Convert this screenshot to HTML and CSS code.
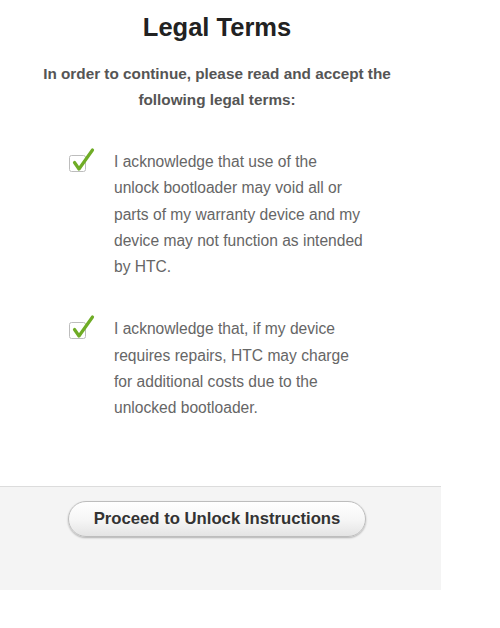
FILE: index.html
```html
<!DOCTYPE html>
<html>
<head>
<meta charset="utf-8">
<link rel="stylesheet" href="styles.css">
</head>
<body>
<div class="page">
  <div class="main">
    <h1 class="title">Legal Terms</h1>
    <p class="intro">In order to continue, please read and accept the following legal terms:</p>
    <ul class="terms">
      <li class="term">
        <span class="check"><svg width="28" height="28" viewBox="0 0 28 28"><rect x="2.5" y="9.5" width="16" height="16" rx="2" fill="#fff" stroke="#bdbdbd"/><path d="M7.5 16.5 L12 23 L25.5 4" fill="none" stroke="#6fac26" stroke-width="3.2" stroke-linecap="round" stroke-linejoin="round"/></svg></span>
        <span class="text">I acknowledge that use of the unlock bootloader may void all or parts of my warranty device and my device may not function as intended by HTC.</span>
      </li>
      <li class="term">
        <span class="check"><svg width="28" height="28" viewBox="0 0 28 28"><rect x="2.5" y="9.5" width="16" height="16" rx="2" fill="#fff" stroke="#bdbdbd"/><path d="M7.5 16.5 L12 23 L25.5 4" fill="none" stroke="#6fac26" stroke-width="3.2" stroke-linecap="round" stroke-linejoin="round"/></svg></span>
        <span class="text">I acknowledge that, if my device requires repairs, HTC may charge for additional costs due to the unlocked bootloader.</span>
      </li>
    </ul>
  </div>
  <div class="footer">
    <button class="proceed">Proceed to Unlock Instructions</button>
  </div>
</div>
</body>
</html>
```
FILE: styles.css
```css
html, body {
  margin: 0;
  padding: 0;
  background: #fff;
}
body {
  font-family: "Liberation Sans", Arial, sans-serif;
}
.page {
  width: 441px;
}
.main {
  padding-top: 11px;
  height: 474px;
  box-sizing: border-box;
}
.title {
  margin: 0;
  padding-right: 7px;
  text-align: center;
  font-size: 25.5px;
  line-height: 32px;
  font-weight: bold;
  color: #222;
}
.intro {
  margin: 18px auto 0;
  width: 380px;
  padding-right: 7px;
  text-align: center;
  font-size: 15.3px;
  line-height: 26px;
  font-weight: bold;
  color: #555;
}
.terms {
  list-style: none;
  margin: 36px 0 0;
  padding: 0 0 0 67px;
}
.term {
  display: flex;
  align-items: flex-start;
  margin-bottom: 36px;
}
.check {
  width: 47px;
  flex: none;
  margin-top: -3px;
}
.check svg {
  display: block;
}
.text {
  width: 250px;
  font-size: 15.6px;
  line-height: 26.3px;
  color: #666;
}
.footer {
  border-top: 1px solid #dcdcdc;
  background: #f4f4f4;
  height: 104px;
  margin-top: 12px;
  padding-top: 14px;
  box-sizing: border-box;
  display: flex;
  justify-content: center;
  align-items: flex-start;
}
.proceed {
  width: 298px;
  height: 36px;
  margin-right: 7px;
  border: 1px solid #bdbdbd;
  border-radius: 18px;
  background: linear-gradient(#ffffff, #f5f5f5 55%, #e4e4e4);
  box-shadow: 0 1px 2px rgba(0,0,0,0.28);
  font-family: "Liberation Sans", Arial, sans-serif;
  font-size: 16.7px;
  font-weight: bold;
  color: #333;
  padding: 0;
}
```
